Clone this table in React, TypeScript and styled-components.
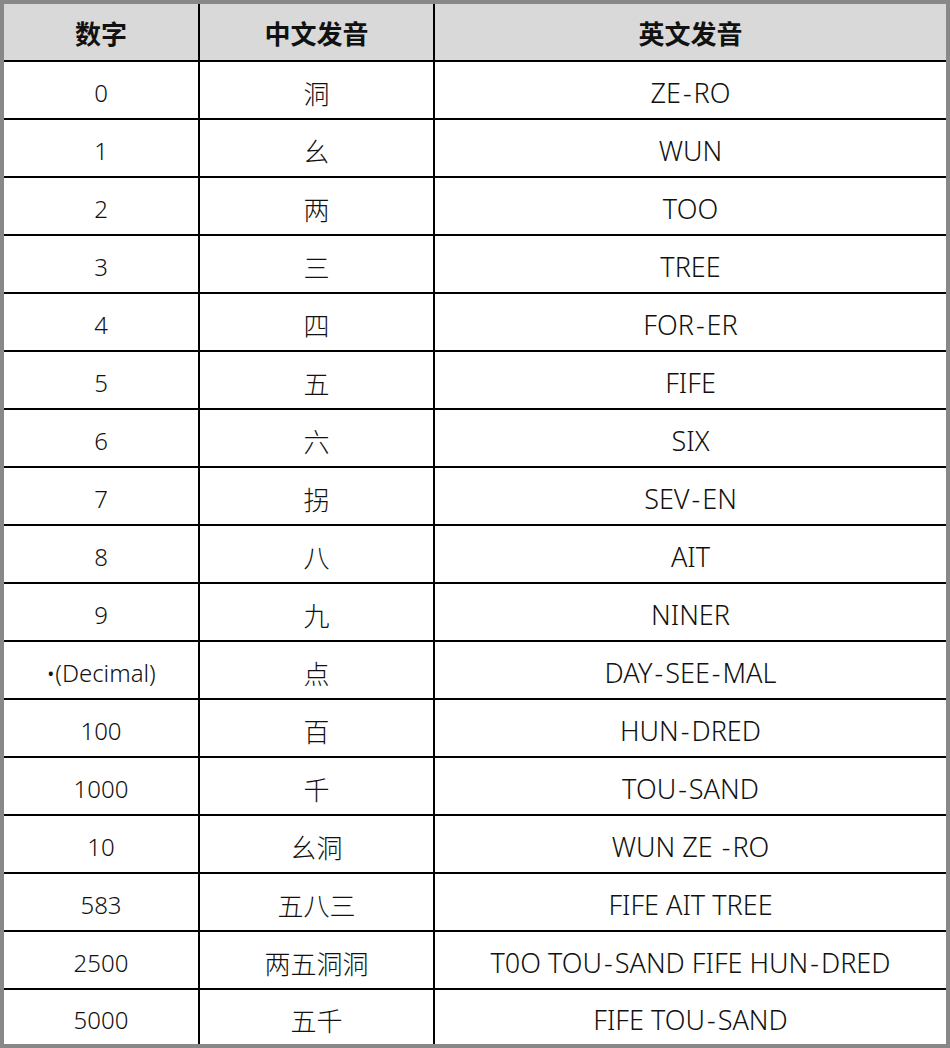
import styled, { createGlobalStyle } from "styled-components";

const GlobalStyle = createGlobalStyle`
	html, body {
		margin: 0;
		padding: 0;
		background: #ffffff;
	}
	body {
		font-family: "Noto Sans", "Noto Sans CJK SC", sans-serif;
	}
`;

const rows: [string, string, string][] = [
	["0", "洞", "ZE-RO"],
	["1", "幺", "WUN"],
	["2", "两", "TOO"],
	["3", "三", "TREE"],
	["4", "四", "FOR-ER"],
	["5", "五", "FIFE"],
	["6", "六", "SIX"],
	["7", "拐", "SEV-EN"],
	["8", "八", "AIT"],
	["9", "九", "NINER"],
	["•(Decimal)", "点", "DAY-SEE-MAL"],
	["100", "百", "HUN-DRED"],
	["1000", "千", "TOU-SAND"],
	["10", "幺洞", "WUN ZE -RO"],
	["583", "五八三", "FIFE AIT TREE"],
	["2500", "两五洞洞", "T0O TOU-SAND FIFE HUN-DRED"],
	["5000", "五千", "FIFE TOU-SAND"],
];

const Frame = styled.div`
	width: 950px;
	height: 1048px;
	box-sizing: border-box;
	border: 4px solid #888888;
	display: flex;
	flex-direction: column;
	background: #ffffff;
`;

const Row = styled.div<{ $header?: boolean; $last?: boolean }>`
	display: grid;
	grid-template-columns: 196px 235px 1fr;
	height: ${(p) => (p.$header ? "56px" : "58px")};
	flex: ${(p) => (p.$last ? "1" : "none")};
	box-sizing: border-box;
	border-top: ${(p) => (p.$header ? "none" : "2px solid #000")};
	background: ${(p) => (p.$header ? "#d9d9d9" : "#ffffff")};
`;

type Kind = "head" | "num" | "zh" | "en";

const sizes: Record<Kind, string> = {
	head: "26px",
	num: "24px",
	zh: "26px",
	en: "27px",
};

const Cell = styled.div<{ $kind: Kind }>`
	display: flex;
	align-items: center;
	justify-content: center;
	box-sizing: border-box;
	border-right: 2px solid #000;
	color: #111;
	font-family: ${(p) =>
		p.$kind === "head" || p.$kind === "zh"
			? `"Noto Sans CJK SC", sans-serif`
			: `"Noto Sans", "Noto Sans CJK SC", sans-serif`};
	font-size: ${(p) => sizes[p.$kind]};
	font-weight: ${(p) => (p.$kind === "head" ? 700 : 300)};
	padding-top: ${(p) => (p.$kind === "head" ? "0" : "4px")};
	white-space: pre;

	&:last-child {
		border-right: none;
	}
`;

const Dash = styled.span`
	margin: 0 2px;
`;

const withDashes = (text: string) =>
	text.split("-").flatMap((part, i) => (i === 0 ? [part] : [<Dash key={i}>-</Dash>, part]));

const App = () => {
	return (
		<>
			<GlobalStyle />
			<Frame>
				<Row $header>
					<Cell $kind="head">数字</Cell>
					<Cell $kind="head">中文发音</Cell>
					<Cell $kind="head">英文发音</Cell>
				</Row>
				{rows.map(([num, zh, en], i) => (
					<Row key={num} $last={i === rows.length - 1}>
						<Cell $kind="num">{num}</Cell>
						<Cell $kind="zh">{zh}</Cell>
						<Cell $kind="en">{withDashes(en)}</Cell>
					</Row>
				))}
			</Frame>
		</>
	);
};

export default App;
